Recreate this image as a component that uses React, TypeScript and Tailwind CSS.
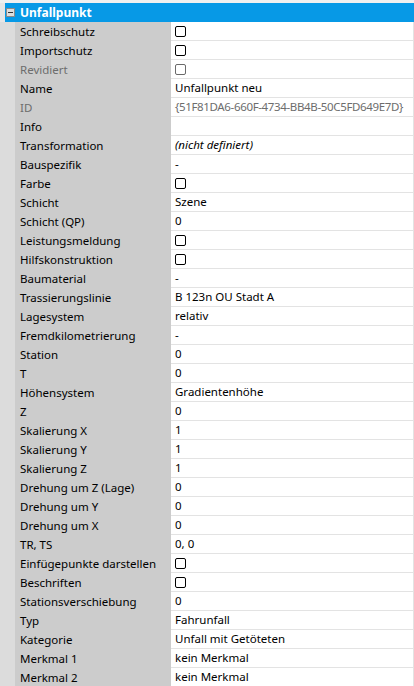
import React from 'react';

type Row = {
    label: string;
    value?: string;
    check?: boolean;
    disabled?: boolean;
    italic?: boolean;
    tight?: boolean;
};

const rows: Row[] = [
    { label: 'Schreibschutz', check: true },
    { label: 'Importschutz', check: true },
    { label: 'Revidiert', check: true, disabled: true },
    { label: 'Name', value: 'Unfallpunkt neu' },
    { label: 'ID', value: '{51F81DA6-660F-4734-BB4B-50C5FD649E7D}', disabled: true, tight: true },
    { label: 'Info', value: '' },
    { label: 'Transformation', value: '(nicht definiert)', italic: true },
    { label: 'Bauspezifik', value: '-' },
    { label: 'Farbe', check: true },
    { label: 'Schicht', value: 'Szene' },
    { label: 'Schicht (QP)', value: '0' },
    { label: 'Leistungsmeldung', check: true },
    { label: 'Hilfskonstruktion', check: true },
    { label: 'Baumaterial', value: '-' },
    { label: 'Trassierungslinie', value: 'B 123n OU Stadt A' },
    { label: 'Lagesystem', value: 'relativ' },
    { label: 'Fremdkilometrierung', value: '-' },
    { label: 'Station', value: '0' },
    { label: 'T', value: '0' },
    { label: 'Höhensystem', value: 'Gradientenhöhe' },
    { label: 'Z', value: '0' },
    { label: 'Skalierung X', value: '1' },
    { label: 'Skalierung Y', value: '1' },
    { label: 'Skalierung Z', value: '1' },
    { label: 'Drehung um Z (Lage)', value: '0' },
    { label: 'Drehung um Y', value: '0' },
    { label: 'Drehung um X', value: '0' },
    { label: 'TR, TS', value: '0, 0' },
    { label: 'Einfügepunkte darstellen', check: true },
    { label: 'Beschriften', check: true },
    { label: 'Stationsverschiebung', value: '0' },
    { label: 'Typ', value: 'Fahrunfall' },
    { label: 'Kategorie', value: 'Unfall mit Getöteten' },
    { label: 'Merkmal 1', value: 'kein Merkmal' },
    { label: 'Merkmal 2', value: 'kein Merkmal' },
];

function PropertyRow({ row }: { row: Row }) {
    return (
        <div className="flex h-[19px]">
            <div className="w-[15px] shrink-0 bg-[#dcdcdc]" />
            <div
                className={`w-[156px] shrink-0 bg-[#cccccc] pl-[5px] leading-[19px] whitespace-nowrap ${
                    row.disabled ? 'text-[#6d6d6d]' : 'text-black'
                }`}
            >
                {row.label}
            </div>
            <div className="flex-1 flex items-center bg-white border-b border-r border-[#e3e3e3] pl-[4px] whitespace-nowrap overflow-hidden">
                {row.check ? (
                    <div
                        className={`w-[11px] h-[11px] rounded-[2px] border ${
                            row.disabled ? 'border-[#6a6a6a]' : 'border-black'
                        }`}
                    />
                ) : (
                    <span
                        className={`${row.italic ? 'italic' : ''} ${
                            row.tight ? 'tracking-[-0.35px]' : ''
                        } ${row.disabled ? 'text-[#6d6d6d]' : 'text-black'}`}
                    >
                        {row.value}
                    </span>
                )}
            </div>
        </div>
    );
}

export default function App() {
    return (
        <div
            className="w-[414px] h-[686px] overflow-hidden bg-[#f0f0f0] pt-[3px] text-[11.5px]"
            style={{ fontFamily: '"Noto Sans", "Open Sans", sans-serif' }}
        >
            <div className="flex h-[19px] items-center">
                <div className="w-[5px] h-full bg-[#e6e6e6]" />
                <div className="flex-1 h-full flex items-center bg-[#0799e6]">
                    <div className="ml-[1px] w-[9px] h-[9px] border border-[#8a8a8a] bg-[#dedede] flex items-center justify-center">
                        <div className="w-[5px] h-[1px] bg-[#333333]" />
                    </div>
                    <span className="ml-[5px] font-bold text-white text-[12px]">Unfallpunkt</span>
                </div>
            </div>
            {rows.map((row) => (
                <PropertyRow key={row.label} row={row} />
            ))}
        </div>
    );
}
